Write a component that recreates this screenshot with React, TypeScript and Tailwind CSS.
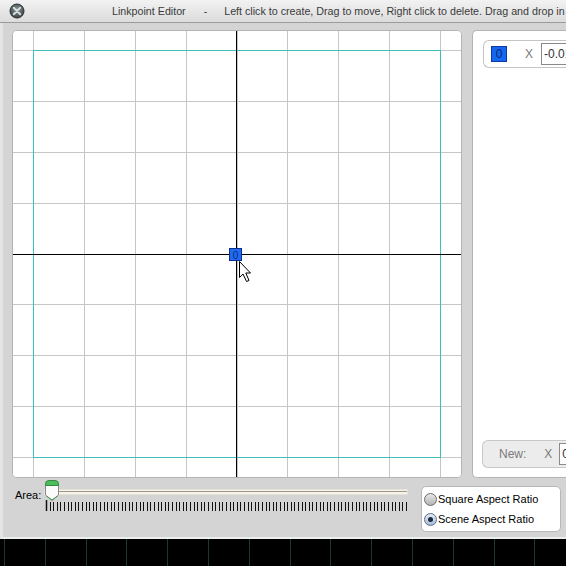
import React from "react";

const font = { fontFamily: '"Liberation Sans", Arial, sans-serif' };

function CloseIcon() {
  return (
    <svg width="16" height="16" viewBox="0 0 16 16">
      <defs>
        <radialGradient id="cg" cx="50%" cy="40%" r="60%">
          <stop offset="0%" stopColor="#8a9496" />
          <stop offset="100%" stopColor="#3c4446" />
        </radialGradient>
      </defs>
      <circle cx="8" cy="8" r="7" fill="url(#cg)" stroke="#2a3032" strokeWidth="1" />
      <path d="M4.8 4.8 L11.2 11.2 M11.2 4.8 L4.8 11.2" stroke="#d8dcdc" strokeWidth="2" strokeLinecap="round" />
    </svg>
  );
}

function Canvas() {
  const cells = [0, 1, 2, 3, 4, 5, 6, 7, 8];
  const vs = cells.map((k) => Math.round(33 + 50.875 * k) + 0.5);
  const hs = cells.map((k) => Math.round(50 + 50.875 * k) + 0.5);
  return (
    <svg width="448" height="446" viewBox="13 31 448 446" className="block">
      <rect x="13" y="31" width="448" height="446" fill="#ffffff" />
      {vs.map((x) => (
        <line key={"v" + x} x1={x} y1="31" x2={x} y2="477" stroke="#c6c6c6" strokeWidth="1" />
      ))}
      {hs.map((y) => (
        <line key={"h" + y} x1="13" y1={y} x2="461" y2={y} stroke="#c6c6c6" strokeWidth="1" />
      ))}
      <rect x="33.5" y="50.5" width="407" height="407" fill="none" stroke="#3fbdb8" strokeWidth="1" />
      <line x1="236.5" y1="31" x2="236.5" y2="477" stroke="#000" strokeWidth="1" />
      <line x1="13" y1="254.5" x2="461" y2="254.5" stroke="#000" strokeWidth="1" />
      <rect x="229.5" y="248.5" width="12" height="12" fill="#1f6cf2" stroke="#0b2d8c" strokeWidth="1" />
      <text x="235.5" y="258.5" fontSize="10" textAnchor="middle" fill="#0b2a78" style={font}>
        0
      </text>
      <path
        d="M239.5 261.5 L239.5 277.5 L243 274 L246.5 281.5 L249 280.5 L245.8 273 L250.5 273 Z"
        fill="#fff"
        stroke="#000"
        strokeWidth="1"
        strokeLinejoin="miter"
      />
    </svg>
  );
}

function Slider() {
  const ticks = Array.from({ length: 101 }, (_, i) => 46 + i * 3.6);
  return (
    <div className="relative w-[370px] h-[36px]">
      <div className="absolute left-[6px] top-[9px] w-[364px] h-[6px] bg-[#f6f4ea] border border-[#e4e2d6]">
        <div className="mt-[1px] h-[1px] bg-[#9c998c]" />
      </div>
      <svg className="absolute left-0 top-0" width="370" height="36" viewBox="38 480 370 36">
        {ticks.map((x, i) => (
          <line
            key={i}
            x1={Math.round(x) + 0.5}
            y1={i === 0 ? 500 : 502}
            x2={Math.round(x) + 0.5}
            y2="511"
            stroke="#111"
            strokeWidth={i === 0 ? 1.5 : 1}
          />
        ))}
        <path d="M45.5 484 L58.5 484 L58.5 495 L52 500.5 L45.5 495 Z" fill="#fbfbfb" stroke="#8a8a8a" strokeWidth="1" />
        <path d="M45.5 484 Q45.5 480.5 49 480.5 L55 480.5 Q58.5 480.5 58.5 484 L58.5 485.5 L45.5 485.5 Z" fill="#4cbc5c" stroke="#2f8a3c" strokeWidth="1" />
        <path d="M46.5 496 L52 500 L57.5 496" fill="none" stroke="#3a9a4a" strokeWidth="1" />
      </svg>
    </div>
  );
}

function Radio({ checked, label }: { checked?: boolean; label: string }) {
  return (
    <div className="flex items-center h-[20px]">
      <div
        className={
          checked
            ? "w-[13px] h-[13px] rounded-full border border-[#5a6e8c] bg-gradient-to-b from-[#e4ecf8] to-[#a8bcd8] flex items-center justify-center"
            : "w-[13px] h-[13px] rounded-full border border-[#6c6c6c] bg-gradient-to-b from-[#e8e8e8] to-[#b4b4b4]"
        }
      >
        {checked && <div className="w-[5px] h-[5px] rounded-full bg-[#1e2a3c]" />}
      </div>
      <span className="ml-[1px] text-[11px] text-black leading-none">{label}</span>
    </div>
  );
}

export default function App() {
  const strip = Array.from({ length: 14 }, (_, i) => 4.5 + Math.round(i * 40.8));
  return (
    <div className="w-[566px] h-[566px] overflow-hidden bg-black flex flex-col" style={font}>
      {/* Title bar */}
      <div className="h-[23px] shrink-0 flex items-center bg-gradient-to-b from-[#f2f2f2] to-[#dcdcdc] border-b border-[#9c9c9c] whitespace-nowrap overflow-hidden">
        <div className="ml-[9px] w-[16px] h-[16px] shrink-0">
          <CloseIcon />
        </div>
        <span className="ml-[87px] text-[10.7px] text-[#3a3a3a] shrink-0">Linkpoint Editor</span>
        <span className="ml-[18px] text-[10.7px] text-[#3a3a3a] shrink-0">-</span>
        <span className="ml-[17px] text-[10.7px] text-[#3a3a3a] shrink-0">
          Left click to create, Drag to move, Right click to delete. Drag and drop in
        </span>
      </div>

      {/* Window body */}
      <div className="h-[516px] shrink-0 bg-[#d4d4d4] border-l-[3px] border-l-[#e4e4e4] border-b-2 border-b-[#eeeeee] pl-[9px] pt-[7px] flex flex-col overflow-hidden">
        <div className="flex gap-[10px]">
          <div className="w-[450px] h-[448px] shrink-0 rounded-[5px] border border-[#b4b4b4] bg-white overflow-hidden">
            <Canvas />
          </div>
          <div className="w-[110px] h-[448px] shrink-0 rounded-l-[5px] border border-r-0 border-[#b4b4b4] bg-white flex flex-col justify-between pl-[10px] pt-[9px] pb-[9px]">
            <div className="h-[28px] rounded-l-[6px] border border-r-0 border-[#c4c4c4] flex items-center pl-[7px]">
              <div className="w-[16px] h-[16px] shrink-0 bg-[#1566f0] border border-[#0a3aa0] flex items-center justify-center text-[12px] text-[#0b2a70] leading-none">
                0
              </div>
              <span className="ml-[18px] text-[12px] text-[#7a7a7a] shrink-0">X</span>
              <div className="ml-[8px] h-[22px] w-[60px] shrink-0 border border-[#8a8a8a] bg-white flex items-center pl-[2px] text-[12px] text-[#333]">
                -0.01
              </div>
            </div>
            <div className="h-[28px] -ml-[1px] rounded-l-[6px] border border-r-0 border-[#c8c8c8] bg-[#ececec] flex items-center pl-[16px]">
              <span className="text-[12px] text-[#7a7a7a] shrink-0">New:</span>
              <span className="ml-[18px] text-[12px] text-[#7a7a7a] shrink-0">X</span>
              <div className="ml-[7px] h-[22px] w-[30px] shrink-0 border border-[#8a8a8a] bg-white flex items-center pl-[2px] text-[12px] text-[#333]">
                0
              </div>
            </div>
          </div>
        </div>

        <div className="flex mt-[2px]">
          <div className="w-[26px] shrink-0 pt-[9px]">
            <span className="ml-[3px] text-[11px] text-black leading-[13px] block">Area:</span>
          </div>
          <div className="shrink-0">
            <Slider />
          </div>
          <div className="ml-[13px] mt-[6px] w-[140px] h-[46px] shrink-0 rounded-[5px] border border-[#b8b8b8] bg-white flex flex-col justify-center pl-[2px]">
            <Radio label="Square Aspect Ratio" />
            <Radio checked label="Scene Aspect Ratio" />
          </div>
        </div>
      </div>

      {/* Background strip */}
      <svg width="566" height="27" className="block shrink-0">
        <rect width="566" height="27" fill="#000" />
        {strip.map((x) => (
          <line key={x} x1={x} y1="0" x2={x} y2="27" stroke="#1c3a2c" strokeWidth="1" />
        ))}
      </svg>
    </div>
  );
}
